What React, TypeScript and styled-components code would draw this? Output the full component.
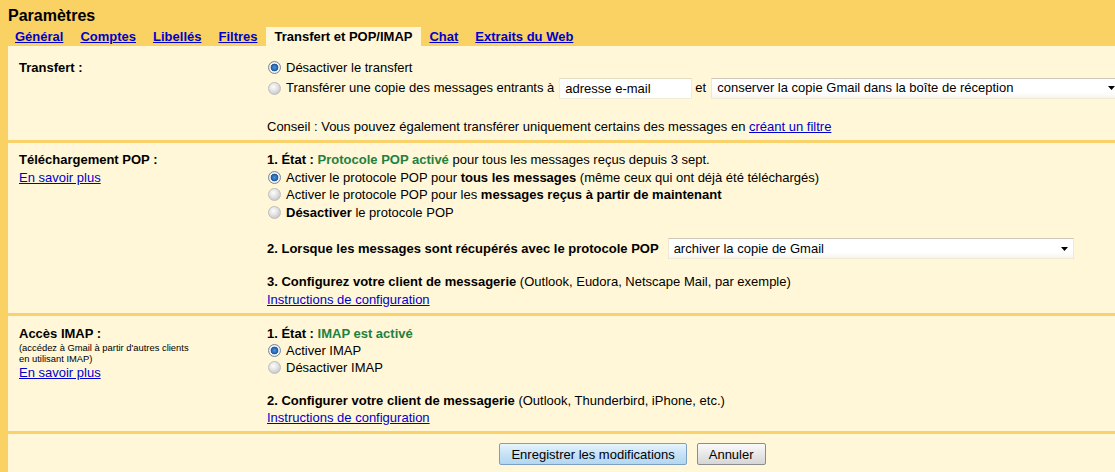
import React from "react";
import styled, { createGlobalStyle } from "styled-components";

const GlobalStyle = createGlobalStyle`
  html, body {
    margin: 0;
    padding: 0;
    overflow: hidden;
    background: #fad163;
  }
  body {
    font-family: "Liberation Sans", Arial, sans-serif;
    font-size: 13px;
    color: #000;
  }
`;

const Page = styled.div`
  width: 1257px;
  padding: 6px 0 0 8px;
  box-sizing: border-box;
`;

const Title = styled.div`
  font-size: 16px;
  font-weight: bold;
  line-height: 19px;
`;

const TabBar = styled.div`
  display: flex;
  margin: 2px 0 0 -1.5px;
`;

const Tab = styled.a<{ $active?: boolean }>`
  display: block;
  padding: 3px 8.5px 2px;
  line-height: 14px;
  font-weight: bold;
  font-size: 13px;
  color: ${(p) => (p.$active ? "#000" : "#0000cc")};
  text-decoration: ${(p) => (p.$active ? "none" : "underline")};
  background: ${(p) => (p.$active ? "#fff7d7" : "transparent")};
  cursor: pointer;
`;

const Panel = styled.div`
  background: #fff7d7;
  width: 1249px;
`;

const Section = styled.div<{ $top: number; $lh?: number }>`
  display: grid;
  grid-template-columns: 259px 1fr;
  padding: ${(p) => p.$top}px 0 5px;
  border-bottom: 3px solid #f9d26c;
  line-height: ${(p) => p.$lh ?? 17.5}px;
`;

const LabelCol = styled.div`
  padding-left: 11px;
`;

const Label = styled.div`
  font-weight: bold;
`;

const Hint = styled.div`
  font-size: 9.4px;
  line-height: 11px;
`;

const Link = styled.a`
  color: #0000cc;
  text-decoration: underline;
  cursor: pointer;
`;

const Line = styled.div``;

const OptionRow = styled.div`
  display: flex;
  align-items: center;
  white-space: nowrap;
`;

const FieldRow = styled(OptionRow)`
  min-height: 23px;
`;

const Radio = styled.span<{ $checked?: boolean }>`
  flex: none;
  display: inline-block;
  width: 13px;
  height: 13px;
  box-sizing: border-box;
  border-radius: 50%;
  margin: 0 5px 0 1px;
  border: 1px solid ${(p) => (p.$checked ? "#75879b" : "#bdbdbd")};
  background: ${(p) =>
    p.$checked
      ? "radial-gradient(circle, #4a95dd 0, #2a6cb8 2.5px, #1d4f8c 3.5px, #f6f6f6 4.2px, #e2e2e2 6px)"
      : "radial-gradient(circle at 40% 35%, #fdfdfd 0, #e4e4e4 4px, #cdcdcd 7px)"};
`;

const Green = styled.b`
  color: #23803e;
`;

const TextInput = styled.input`
  width: 133px;
  height: 21px;
  box-sizing: border-box;
  margin: 0 3px 0 5px;
  padding: 0 5px;
  border: 1px solid #f1ecd4;
  border-top-color: #e2dcc0;
  background: #fff;
  font-family: "Liberation Sans", Arial, sans-serif;
  font-size: 13px;
  color: #000;
  outline: none;
`;

const SelectBox = styled.div<{ $width: number; $gap?: number }>`
  display: flex;
  align-items: center;
  justify-content: space-between;
  width: ${(p) => p.$width}px;
  height: 21px;
  box-sizing: border-box;
  margin-left: ${(p) => p.$gap ?? 5}px;
  padding: 0 5px;
  background: linear-gradient(#fff 70%, #f7f5ee);
  border: 1px solid #eee9d3;
  border-top-color: #cfc8b8;
  font-size: 13px;
`;

const Spacer = styled.div<{ $h: number }>`
  height: ${(p) => p.$h}px;
`;

const ButtonBar = styled.div`
  display: flex;
  justify-content: center;
  gap: 10px;
  padding-top: 9px;
  padding-bottom: 8px;
`;

const Button = styled.button<{ $primary?: boolean }>`
  height: 22px;
  padding: 0 11px;
  border-radius: 2px;
  font-family: "Liberation Sans", Arial, sans-serif;
  font-size: 13px;
  color: #000;
  cursor: pointer;
  border: 1px solid ${(p) => (p.$primary ? "#7d9fc4" : "#8c8c8c")};
  background: ${(p) =>
    p.$primary
      ? "linear-gradient(#e8f4fc, #c6e2f6 50%, #b3d7f1)"
      : "linear-gradient(#fafafa, #e8e8e8 50%, #d6d6d6)"};
`;

const Arrow = () => (
  <svg width="7" height="4" viewBox="0 0 7 4">
    <path d="M0 0h7L3.5 4z" fill="#000" />
  </svg>
);

const tabs = [
  "Général",
  "Comptes",
  "Libellés",
  "Filtres",
  "Transfert et POP/IMAP",
  "Chat",
  "Extraits du Web",
];

export default function App() {
  return (
    <>
      <GlobalStyle />
      <Page>
        <Title>Paramètres</Title>
        <TabBar>
          {tabs.map((t) => (
            <Tab key={t} $active={t === "Transfert et POP/IMAP"}>
              {t}
            </Tab>
          ))}
        </TabBar>
        <Panel>
          <Section $top={13}>
            <LabelCol>
              <Label>Transfert :</Label>
            </LabelCol>
            <div>
              <OptionRow>
                <Radio $checked />
                Désactiver le transfert
              </OptionRow>
              <FieldRow>
                <Radio />
                Transférer une copie des messages entrants à
                <TextInput defaultValue="adresse e-mail" />
                et
                <SelectBox $width={410}>
                  conserver la copie Gmail dans la boîte de réception
                  <Arrow />
                </SelectBox>
              </FieldRow>
              <Spacer $h={18} />
              <Line>
                Conseil : Vous pouvez également transférer uniquement certains des messages en{" "}
                <Link>créant un filtre</Link>
              </Line>
            </div>
          </Section>

          <Section $top={8}>
            <LabelCol>
              <Label>Téléchargement POP :</Label>
              <Link>En savoir plus</Link>
            </LabelCol>
            <div>
              <Line>
                <b>1. État : </b>
                <Green>Protocole POP activé</Green> pour tous les messages reçus depuis 3 sept.
              </Line>
              <OptionRow>
                <Radio $checked />
                Activer le protocole POP pour&nbsp;<b>tous les messages</b>&nbsp;(même ceux qui ont déjà été téléchargés)
              </OptionRow>
              <OptionRow>
                <Radio />
                Activer le protocole POP pour les&nbsp;<b>messages reçus à partir de maintenant</b>
              </OptionRow>
              <OptionRow>
                <Radio />
                <b>Désactiver</b>&nbsp;le protocole POP
              </OptionRow>
              <Spacer $h={16} />
              <FieldRow>
                <b>2. Lorsque les messages sont récupérés avec le protocole POP</b>
                <SelectBox $width={406} $gap={9}>
                  archiver la copie de Gmail
                  <Arrow />
                </SelectBox>
              </FieldRow>
              <Spacer $h={13} />
              <Line>
                <b>3. Configurez votre client de messagerie</b> (Outlook, Eudora, Netscape Mail, par exemple)
              </Line>
              <Line>
                <Link>Instructions de configuration</Link>
              </Line>
            </div>
          </Section>

          <Section $top={9} $lh={17}>
            <LabelCol>
              <Label>Accès IMAP :</Label>
              <Hint>(accédez à Gmail à partir d'autres clients</Hint>
              <Hint>en utilisant IMAP)</Hint>
              <Link>En savoir plus</Link>
            </LabelCol>
            <div>
              <Line>
                <b>1. État : </b>
                <Green>IMAP est activé</Green>
              </Line>
              <OptionRow>
                <Radio $checked />
                Activer IMAP
              </OptionRow>
              <OptionRow>
                <Radio />
                Désactiver IMAP
              </OptionRow>
              <Spacer $h={16} />
              <Line>
                <b>2. Configurer votre client de messagerie</b> (Outlook, Thunderbird, iPhone, etc.)
              </Line>
              <Line>
                <Link>Instructions de configuration</Link>
              </Line>
            </div>
          </Section>

          <ButtonBar>
            <Button $primary>Enregistrer les modifications</Button>
            <Button>Annuler</Button>
          </ButtonBar>
        </Panel>
      </Page>
    </>
  );
}
